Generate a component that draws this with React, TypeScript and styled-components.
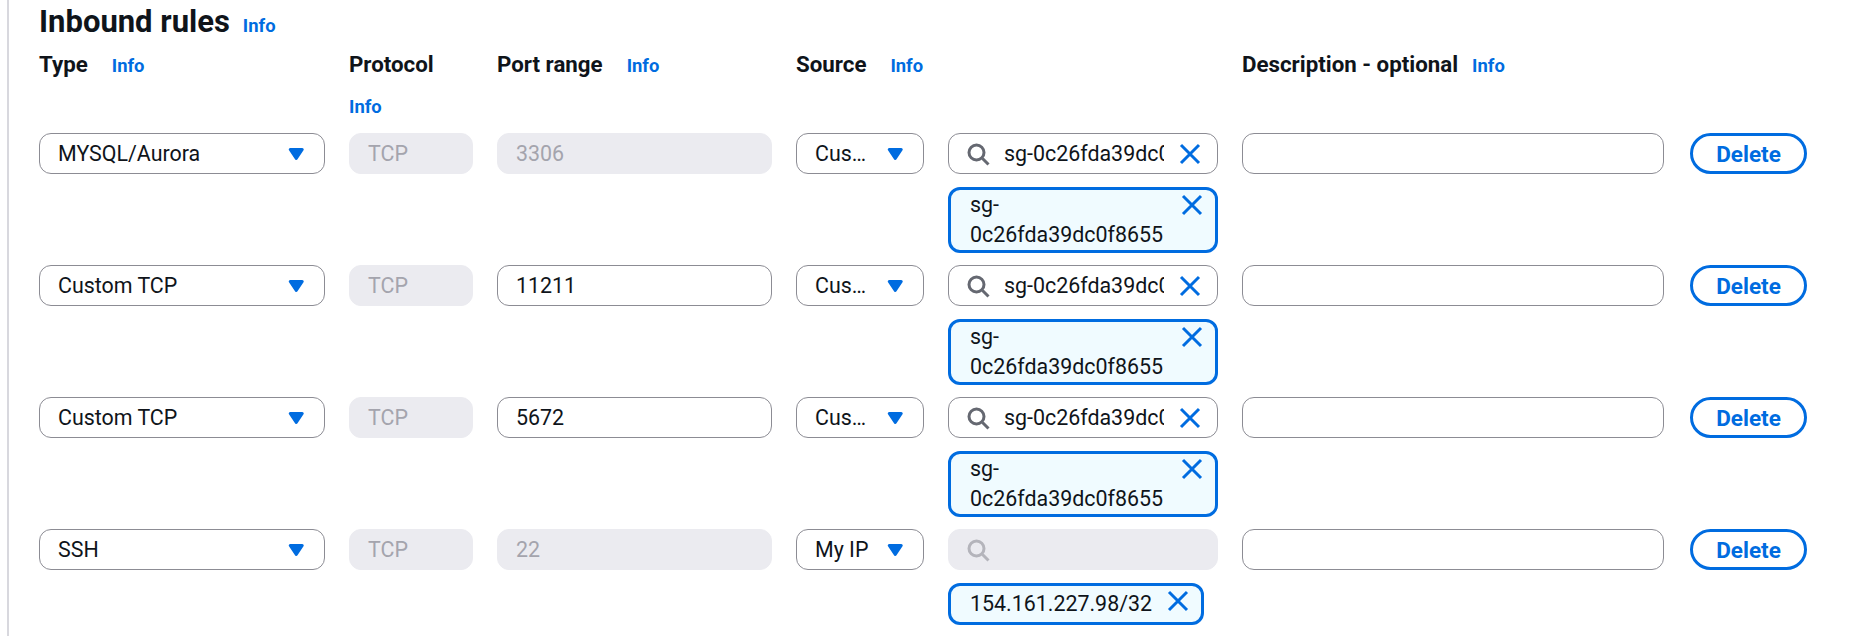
import React from "react";
import styled, { createGlobalStyle, css } from "styled-components";

const BLUE = "#006ce0";
const TEXT = "#0f141a";
const BORDER = "#8c8c94";
const DISABLED_BG = "#ebebf0";
const DISABLED_TEXT = "#a4a4ad";

const GlobalStyle = createGlobalStyle`
  html, body { margin: 0; padding: 0; background: #ffffff; }
  body {
    font-family: Roboto, "Open Sans", "Liberation Sans", sans-serif;
    color: ${TEXT};
  }
  * { box-sizing: border-box; }
`;

const Page = styled.div`
  min-height: 100vh;
  margin-left: 7px;
  border-left: 2px solid #d8d8de;
  padding: 4px 0 0 30px;
`;

const TitleRow = styled.div`
  display: flex;
  align-items: baseline;
  gap: 13px;
  margin-bottom: 8px;
`;

const Title = styled.h2`
  margin: 0;
  font-size: 31px;
  line-height: 36px;
  font-weight: 700;
`;

const InfoLink = styled.a`
  font-size: 18.4px;
  line-height: 30px;
  font-weight: 700;
  color: ${BLUE};
  text-decoration: none;
  cursor: pointer;
`;

const RuleGrid = styled.div`
  display: grid;
  grid-template-columns: 286px 124px 275px 128px 270px 422px 119px;
  column-gap: 24px;
`;

const HeaderGrid = styled(RuleGrid)`
  margin-bottom: 11px;
`;

const HeaderCell = styled.div<{ $gap?: number; $span?: number }>`
  display: flex;
  flex-wrap: wrap;
  align-items: baseline;
  column-gap: ${(p) => p.$gap ?? 24}px;
  row-gap: 13px;
  grid-column: span ${(p) => p.$span ?? 1};
`;

const Label = styled.span`
  font-size: 22.3px;
  line-height: 30px;
  font-weight: 700;
`;

const RuleList = styled.div`
  display: flex;
  flex-direction: column;
  gap: 12px;
`;

const RuleRow = styled(RuleGrid)`
  align-items: start;
`;

const boxBase = css`
  height: 41px;
  border-radius: 12px;
  border: 1px solid ${BORDER};
  background: #ffffff;
  font-size: 21.4px;
  display: flex;
  align-items: center;
  min-width: 0;
`;

const SelectBox = styled.div`
  ${boxBase}
  padding: 0 20px 0 18px;
  gap: 14px;
`;

const SelectValue = styled.span`
  flex: 1;
  min-width: 0;
  overflow: hidden;
  white-space: nowrap;
  text-overflow: ellipsis;
`;

const TextField = styled.div<{ $disabled?: boolean }>`
  ${boxBase}
  padding: 0 18px;
  background: ${(p) => (p.$disabled ? DISABLED_BG : "#ffffff")};
  border-color: ${(p) => (p.$disabled ? DISABLED_BG : BORDER)};
  color: ${(p) => (p.$disabled ? DISABLED_TEXT : TEXT)};
`;

const SourceStack = styled.div`
  display: flex;
  flex-direction: column;
  align-items: flex-start;
  gap: 13px;
  min-width: 0;
`;

const SearchBox = styled.div<{ $disabled?: boolean }>`
  ${boxBase}
  width: 100%;
  padding: 0 15px 0 17px;
  gap: 14px;
  background: ${(p) => (p.$disabled ? DISABLED_BG : "#ffffff")};
  border-color: ${(p) => (p.$disabled ? DISABLED_BG : BORDER)};
  color: ${(p) => (p.$disabled ? "#b4b4bb" : "#656871")};
`;

const SearchText = styled.span`
  flex: 1;
  min-width: 0;
  overflow: hidden;
  white-space: nowrap;
  color: ${TEXT};
`;

const IconSlot = styled.span<{ $color?: string }>`
  display: flex;
  align-items: center;
  flex: none;
  color: ${(p) => p.$color ?? "inherit"};
`;

const Token = styled.div`
  display: flex;
  align-items: center;
  width: fit-content;
  max-width: 100%;
  min-height: 42px;
  padding: 0 11px 0 19px;
  border: 3px solid ${BLUE};
  border-radius: 12px;
  background: #f0fbff;
  gap: 14px;
  font-size: 21.4px;
  line-height: 30px;
`;

const TokenText = styled.span`
  flex: 1;
  min-width: 0;
`;

const Dismiss = styled.span`
  align-self: flex-start;
  height: 30px;
  display: flex;
  align-items: center;
  flex: none;
  color: ${BLUE};
`;

const DeleteButton = styled.button`
  justify-self: end;
  height: 41px;
  width: 117px;
  padding: 0;
  border: 3px solid ${BLUE};
  border-radius: 21px;
  background: #ffffff;
  color: ${BLUE};
  font-family: inherit;
  font-size: 22.5px;
  font-weight: 700;
  cursor: pointer;
`;

const CaretIcon = () => (
  <svg width="16.5" height="24" viewBox="2.5 0 11 16" aria-hidden="true">
    <path
      d="M4 5h8l-4 6-4-6z"
      fill={BLUE}
      stroke={BLUE}
      strokeWidth="2"
      strokeLinejoin="round"
    />
  </svg>
);

const SearchIcon = () => (
  <svg width="24" height="24" viewBox="0 0 16 16" aria-hidden="true" fill="none">
    <circle cx="7" cy="7" r="5" stroke="currentColor" strokeWidth="2" />
    <path d="m15 15-4-4" stroke="currentColor" strokeWidth="2" />
  </svg>
);

const CloseIcon = () => (
  <svg width="24" height="24" viewBox="0 0 16 16" aria-hidden="true" fill="none">
    <path d="m2 2 12 12M14 2 2 14" stroke="currentColor" strokeWidth="2" />
  </svg>
);

type Rule = {
  type: string;
  port: string;
  portDisabled: boolean;
  source: string;
  search: string;
  searchDisabled?: boolean;
  token: string;
};

const rules: Rule[] = [
  {
    type: "MYSQL/Aurora",
    port: "3306",
    portDisabled: true,
    source: "Custom",
    search: "sg-0c26fda39dc0f8655",
    token: "sg-0c26fda39dc0f8655",
  },
  {
    type: "Custom TCP",
    port: "11211",
    portDisabled: false,
    source: "Custom",
    search: "sg-0c26fda39dc0f8655",
    token: "sg-0c26fda39dc0f8655",
  },
  {
    type: "Custom TCP",
    port: "5672",
    portDisabled: false,
    source: "Custom",
    search: "sg-0c26fda39dc0f8655",
    token: "sg-0c26fda39dc0f8655",
  },
  {
    type: "SSH",
    port: "22",
    portDisabled: true,
    source: "My IP",
    search: "",
    searchDisabled: true,
    token: "154.161.227.98/32",
  },
];

const Select = ({ value }: { value: string }) => (
  <SelectBox>
    <SelectValue>{value}</SelectValue>
    <IconSlot>
      <CaretIcon />
    </IconSlot>
  </SelectBox>
);

export default function App() {
  return (
    <>
      <GlobalStyle />
      <Page>
        <TitleRow>
          <Title>Inbound rules</Title>
          <InfoLink>Info</InfoLink>
        </TitleRow>
        <HeaderGrid>
          <HeaderCell>
            <Label>Type</Label>
            <InfoLink>Info</InfoLink>
          </HeaderCell>
          <HeaderCell>
            <Label>Protocol</Label>
            <InfoLink>Info</InfoLink>
          </HeaderCell>
          <HeaderCell>
            <Label>Port range</Label>
            <InfoLink>Info</InfoLink>
          </HeaderCell>
          <HeaderCell $span={2}>
            <Label>Source</Label>
            <InfoLink>Info</InfoLink>
          </HeaderCell>
          <HeaderCell $gap={14}>
            <Label>Description - optional</Label>
            <InfoLink>Info</InfoLink>
          </HeaderCell>
          <HeaderCell />
        </HeaderGrid>
        <RuleList>
          {rules.map((r, i) => (
            <RuleRow key={i}>
              <Select value={r.type} />
              <TextField $disabled>TCP</TextField>
              <TextField $disabled={r.portDisabled}>{r.port}</TextField>
              <Select value={r.source} />
              <SourceStack>
                <SearchBox $disabled={r.searchDisabled}>
                  <IconSlot>
                    <SearchIcon />
                  </IconSlot>
                  <SearchText>{r.search}</SearchText>
                  {r.search && (
                    <IconSlot $color={BLUE}>
                      <CloseIcon />
                    </IconSlot>
                  )}
                </SearchBox>
                <Token>
                  <TokenText>{r.token}</TokenText>
                  <Dismiss>
                    <CloseIcon />
                  </Dismiss>
                </Token>
              </SourceStack>
              <TextField />
              <DeleteButton>Delete</DeleteButton>
            </RuleRow>
          ))}
        </RuleList>
      </Page>
    </>
  );
}
